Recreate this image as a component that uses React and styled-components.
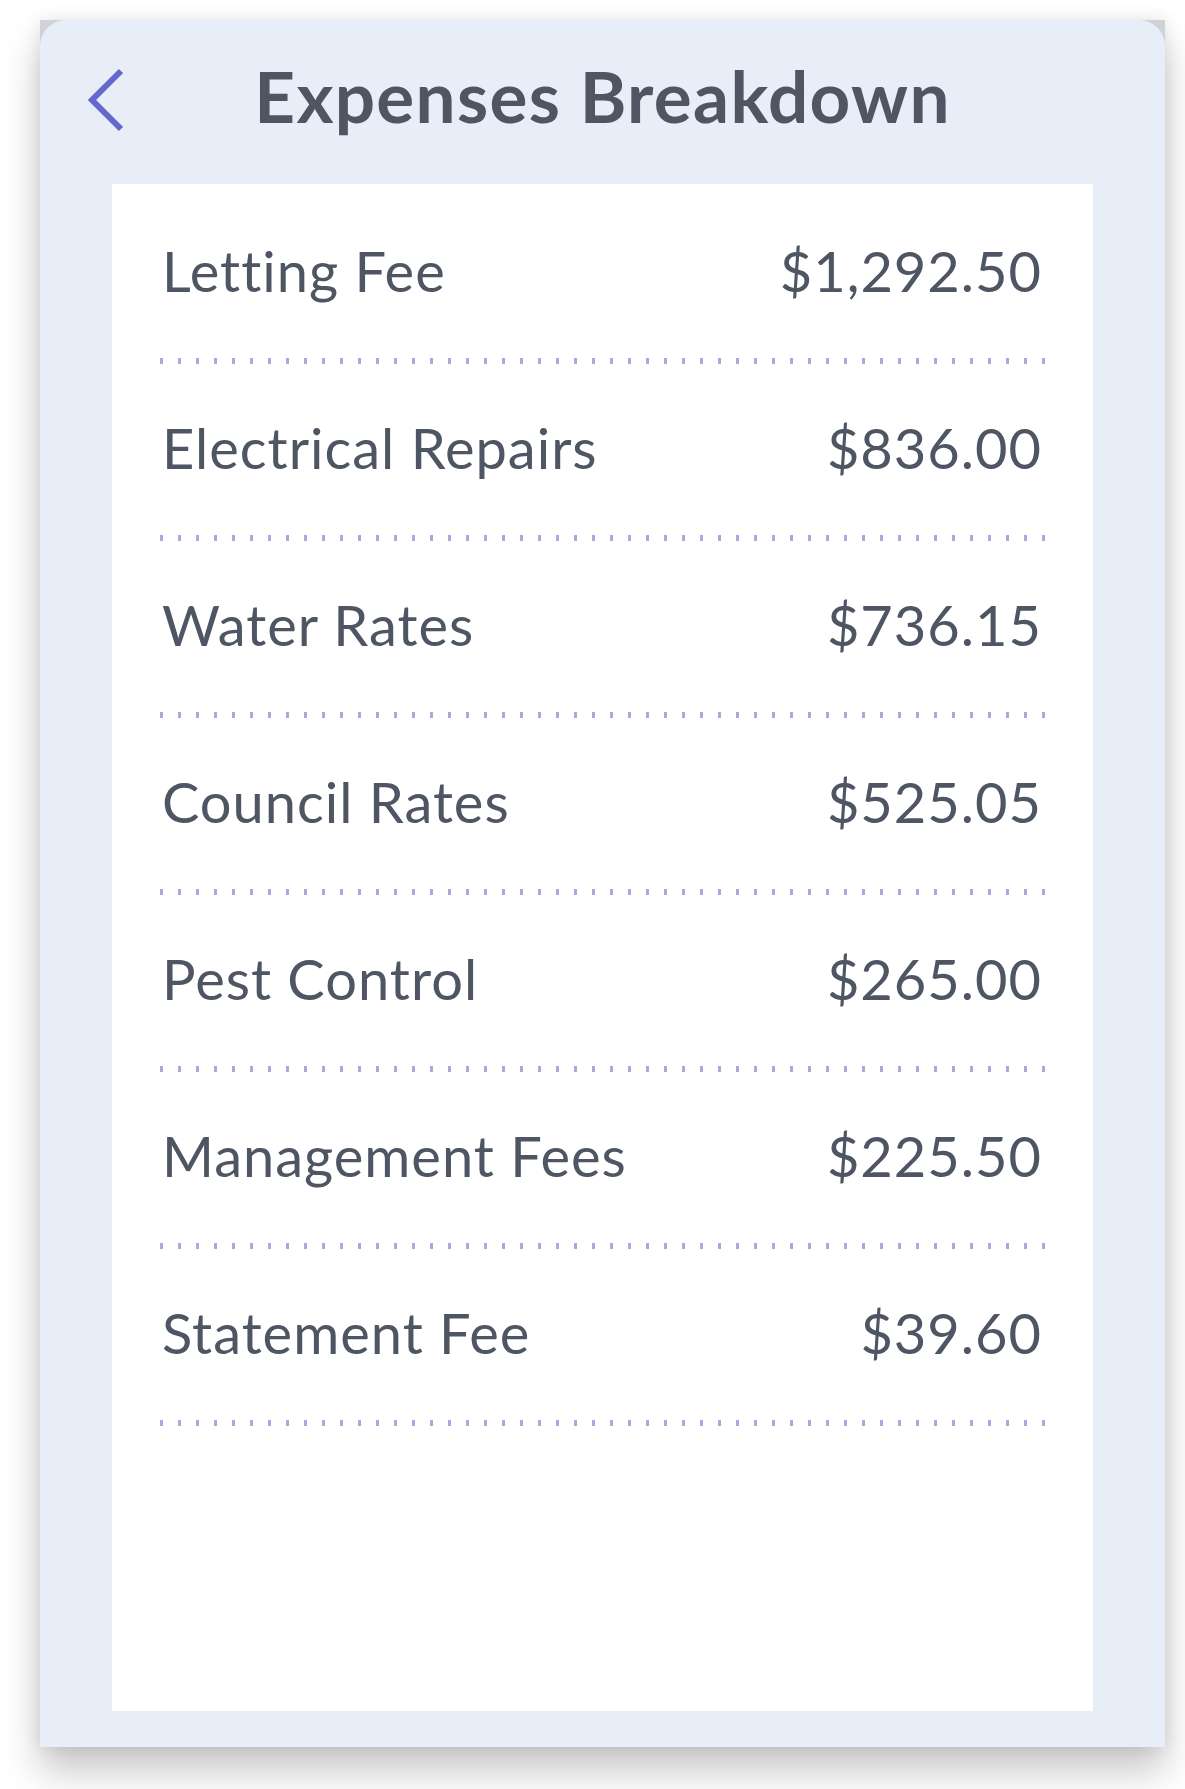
import React from "react";
import styled, { createGlobalStyle } from "styled-components";

const GlobalStyle = createGlobalStyle`
  html, body {
    margin: 0;
    padding: 0;
    background: #ffffff;
  }
  body {
    font-family: Lato, "Noto Sans", sans-serif;
    color: #4e5563;
  }
`;

const expenses = [
  { label: "Letting Fee", amount: "$1,292.50" },
  { label: "Electrical Repairs", amount: "$836.00" },
  { label: "Water Rates", amount: "$736.15" },
  { label: "Council Rates", amount: "$525.05" },
  { label: "Pest Control", amount: "$265.00" },
  { label: "Management Fees", amount: "$225.50" },
  { label: "Statement Fee", amount: "$39.60" },
];

const BackIcon = () => (
  <svg width="40" height="64" viewBox="0 0 40 64" aria-hidden="true">
    <polyline
      points="36,3 7,32 36,61"
      fill="none"
      stroke="#6666cf"
      strokeWidth="6"
    />
  </svg>
);

const App = () => {
  return (
    <Page>
      <GlobalStyle />
      <Frame>
        <Card>
          <Header>
            <BackButton>
              <BackIcon />
            </BackButton>
            <Title>Expenses Breakdown</Title>
            <span />
          </Header>
          <Panel>
            {expenses.map((item) => (
              <Row key={item.label}>
                <Line>
                  <span>{item.label}</span>
                  <span>{item.amount}</span>
                </Line>
                <Dots />
              </Row>
            ))}
          </Panel>
        </Card>
      </Frame>
    </Page>
  );
};

export default App;

const Page = styled.div`
  min-height: 1789px;
  padding: 20px 20px 42px 40px;
  box-sizing: border-box;
  background: #ffffff;
`;

const Frame = styled.div`
  width: 1125px;
  height: 1727px;
  background: #cfd2d6;
  box-shadow: 0 24px 36px rgba(0, 0, 0, 0.22), 0 0 16px rgba(0, 0, 0, 0.09);
`;

const Card = styled.div`
  height: 100%;
  display: flex;
  flex-direction: column;
  background: #e7eef8;
  border-radius: 26px 26px 0 0;
  padding-bottom: 36px;
  box-sizing: border-box;
`;

const Header = styled.div`
  height: 164px;
  flex-shrink: 0;
  display: grid;
  grid-template-columns: 1fr auto 1fr;
  align-items: center;
  padding-bottom: 12px;
  box-sizing: border-box;
`;

const BackButton = styled.div`
  display: flex;
  align-items: center;
  padding-left: 45px;
  padding-top: 8px;
  svg {
    display: block;
  }
`;

const Title = styled.h1`
  margin: 0;
  font-size: 71px;
  line-height: 84px;
  letter-spacing: 1.3px;
  font-weight: 700;
  color: #4f5562;
`;

const Panel = styled.div`
  flex: 1;
  margin: 0 72px;
  background: #ffffff;
  padding: 53px 48px 0;
`;

const Row = styled.div`
  display: flex;
  flex-direction: column;
  padding-bottom: 50px;
`;

const Line = styled.div`
  display: flex;
  justify-content: space-between;
  align-items: baseline;
  font-size: 56px;
  line-height: 67px;
  font-weight: 400;
  letter-spacing: 1px;
  padding: 0 3px 0 2px;
`;

const Dots = styled.div`
  margin-top: 54px;
  height: 6px;
  background: repeating-linear-gradient(
    to right,
    #a9a9df 0 3px,
    transparent 3px 18px
  );
`;
